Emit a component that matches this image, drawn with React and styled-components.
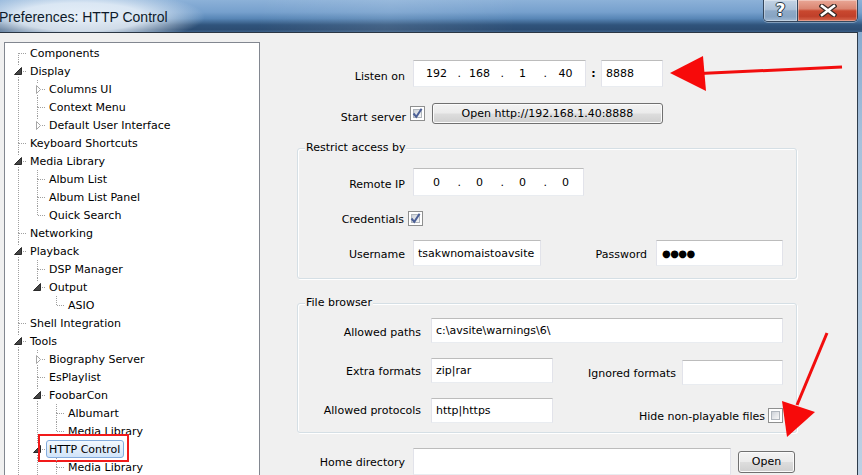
import React from 'react';
import styled, { createGlobalStyle } from 'styled-components';

const GlobalStyle = createGlobalStyle`
  html, body { margin: 0; padding: 0; background: #f0f0f0; overflow: hidden; }
  body { font-family: "DejaVu Sans", Tahoma, sans-serif; font-size: 11px; color: #000; }
  * { box-sizing: border-box; }
`;

const Window = styled.div`
  position: relative;
  width: 862px;
  height: 475px;
  overflow: hidden;
  display: flex;
  flex-direction: column;
  background: linear-gradient(180deg, #7fa5cc 0%, #a7c1dc 30%, #bcd0e4 100%);
`;

const TitleBar = styled.div`
  height: 32px;
  flex: none;
  display: flex;
  align-items: flex-start;
  justify-content: space-between;
  background:
    radial-gradient(ellipse 125px 27px at 80px 17px, rgba(236,243,250,0.97) 0%, rgba(230,239,248,0.88) 52%, rgba(220,232,245,0) 100%),
    linear-gradient(100deg, rgba(255,255,255,0) 30%, rgba(255,255,255,0.10) 45%, rgba(255,255,255,0) 60%),
    linear-gradient(180deg, #8cb1d8 0%, #76a0cd 38%, #5886b6 58%, #30547c 78%, #2c4d73 92%, #3b6088 100%);
`;

const Title = styled.div`
  margin-left: -1px;
  padding-top: 9px;
  font-family: "Liberation Sans", Arial, sans-serif;
  font-size: 14px;
  line-height: 16px;
  color: #0d1a2a;
  white-space: nowrap;
`;

const CaptionGroup = styled.div`
  display: flex;
  margin-right: 4px;
  height: 22px;
  border: 1px solid #34465c;
  border-top: none;
  border-radius: 0 0 5px 5px;
  overflow: hidden;
  box-shadow: 0 1px 0 rgba(255,255,255,0.35);
`;

const CaptionButton = styled.div`
  width: ${p => p.$w}px;
  height: 100%;
  display: flex;
  align-items: center;
  justify-content: center;
  border-right: ${p => (p.$divider ? '1px solid #34465c' : 'none')};
  box-shadow: inset 0 0 0 1px rgba(255,255,255,0.35);
  background: ${p => p.$bg};
`;

const HelpGlyph = styled.span`
  font-family: "DejaVu Sans", sans-serif;
  font-weight: bold;
  font-size: 17px;
  line-height: 17px;
  color: #fff;
  text-shadow: 0 0 1px #1f2d3d, 1px 0 0 #2c3b4c, -1px 0 0 #2c3b4c, 0 1px 0 #2c3b4c, 0 -1px 0 #2c3b4c;
`;

const Body = styled.div`
  flex: 1;
  min-height: 0;
  display: flex;
  align-items: flex-start;
  margin-right: 4px;
  background: #f0f0f0;
  border-top: 1px solid #2a3644;
  border-right: 1px solid #2e3c4b;
  overflow: hidden;
`;

/* ---------- Tree ---------- */

const TreePanel = styled.div`
  width: 256px;
  height: 440px;
  flex: none;
  margin: 9px 0 0 4px;
  padding-top: 1px;
  background: #fff;
  border: 1px solid #828790;
`;

const TreeLine = styled.div`
  display: flex;
  height: 18px;
`;

const DOT_V = (y, h) =>
  `repeating-linear-gradient(to bottom, #a0a0a0 0 1px, transparent 1px 2px) 13px ${y}px / 1px ${h} no-repeat`;
const DOT_H = `repeating-linear-gradient(to right, #a0a0a0 0 1px, transparent 1px 2px) 14px 9px / 8px 1px no-repeat`;

const Guide = styled.div`
  width: 19px;
  flex: none;
  background: ${p => (p.$on ? DOT_V(0, '100%') : 'none')};
`;

const Connector = styled.div`
  position: relative;
  width: 22px;
  flex: none;
  background: ${p => [p.$top && DOT_V(0, '9px'), p.$bottom && DOT_V(9, '9px'), DOT_H].filter(Boolean).join(', ')};
`;

const Expander = styled.svg`
  position: absolute;
  left: 9px;
  top: 4px;
  width: 9px;
  height: 11px;
  background: #fff;
`;

const NodeLabel = styled.span`
  position: relative;
  display: flex;
  align-items: center;
  height: 18px;
  padding: 1px 3px 0 2px;
  white-space: nowrap;
  border: 1px solid ${p => (p.$selected ? '#84acdd' : 'transparent')};
  border-radius: 3px;
  background: ${p => (p.$selected ? 'linear-gradient(180deg, #f2f8fe 0%, #e1eefc 50%, #d0e4fa 100%)' : 'transparent')};
`;

const Callout = styled.span`
  position: absolute;
  left: -9px;
  right: -6px;
  top: -7px;
  bottom: -5px;
  border: 2px solid #f11a1a;
  pointer-events: none;
`;

const treeRows = [
  { t: 'Components', g: [], first: true },
  { t: 'Display', g: [], exp: 'open' },
  { t: 'Columns UI', g: [1], exp: 'closed' },
  { t: 'Context Menu', g: [1] },
  { t: 'Default User Interface', g: [1], last: true, exp: 'closed' },
  { t: 'Keyboard Shortcuts', g: [] },
  { t: 'Media Library', g: [], exp: 'open' },
  { t: 'Album List', g: [1] },
  { t: 'Album List Panel', g: [1] },
  { t: 'Quick Search', g: [1], last: true },
  { t: 'Networking', g: [] },
  { t: 'Playback', g: [], exp: 'open' },
  { t: 'DSP Manager', g: [1] },
  { t: 'Output', g: [1], last: true, exp: 'open' },
  { t: 'ASIO', g: [1, 0], last: true },
  { t: 'Shell Integration', g: [] },
  { t: 'Tools', g: [], exp: 'open' },
  { t: 'Biography Server', g: [1], exp: 'closed' },
  { t: 'EsPlaylist', g: [1] },
  { t: 'FoobarCon', g: [1], exp: 'open' },
  { t: 'Albumart', g: [1, 1] },
  { t: 'Media Library', g: [1, 1], last: true },
  { t: 'HTTP Control', g: [1], exp: 'open', selected: true },
  { t: 'Media Library', g: [1, 1] },
];

function TreeRow({ row }) {
  return (
    <TreeLine>
      {row.g.map((on, i) => (
        <Guide key={i} $on={!!on} />
      ))}
      <Connector $top={!row.first} $bottom={!row.last}>
        {row.exp === 'open' && (
          <Expander viewBox="0 0 9 11">
            <polygon points="7.5,1.5 7.5,8.5 0.5,8.5" fill="#454545" stroke="#2a2a2a" strokeWidth="1" />
          </Expander>
        )}
        {row.exp === 'closed' && (
          <Expander viewBox="0 0 9 11">
            <polygon points="3.5,1.5 7.5,5.5 3.5,9.5" fill="#fff" stroke="#a6a6a6" strokeWidth="1" />
          </Expander>
        )}
      </Connector>
      <NodeLabel $selected={row.selected}>
        {row.t}
        {row.selected && <Callout />}
      </NodeLabel>
    </TreeLine>
  );
}

/* ---------- Settings ---------- */

const Settings = styled.div`
  flex: 1;
  display: flex;
  flex-direction: column;
  padding: 27px 0 0 37px;
`;

const FormRow = styled.div`
  display: flex;
  align-items: ${p => p.$align || 'center'};
  height: ${p => p.$h}px;
  margin-top: ${p => p.$mt || 0}px;
  flex: none;
`;

const FieldLabel = styled.span`
  width: ${p => p.$w}px;
  flex: none;
  margin-right: ${p => p.$gap}px;
  text-align: right;
  white-space: nowrap;
  line-height: 13px;
  padding-top: ${p => (p.$shift > 0 ? p.$shift * 2 : 0)}px;
  padding-bottom: ${p => (p.$shift < 0 ? -p.$shift * 2 : 0)}px;
`;

const InlineLabel = styled.span`
  flex: none;
  margin-left: ${p => p.$ml || '0'};
  margin-right: ${p => p.$gap}px;
  white-space: nowrap;
  line-height: 13px;
  padding-top: 2px;
`;

const TextBox = styled.div`
  width: ${p => (p.$w ? `${p.$w}px` : 'auto')};
  flex: ${p => (p.$w ? 'none' : '1')};
  height: ${p => p.$h}px;
  display: flex;
  align-items: center;
  padding-left: 4px;
  background: #fff;
  border: 1px solid;
  border-color: #bcbcbc #e2e3ea #e9ecf0 #e2e3ea;
  white-space: nowrap;
  overflow: hidden;
`;

const IpSeg = styled.span`
  width: 37px;
  flex: none;
  text-align: center;
`;

const IpDot = styled.span`
  width: 6px;
  flex: none;
  text-align: right;
`;

const Colon = styled.span`
  width: 15px;
  flex: none;
  text-align: center;
  font-weight: bold;
`;

const Secret = styled.span`
  font-size: 10px;
  letter-spacing: -0.6px;
  padding-left: 1px;
`;

const CheckBox = styled.div`
  width: 15px;
  height: 15px;
  flex: none;
  border: 1px solid #8e8f8f;
  padding: 2px;
  background: #fff;
  display: flex;
`;

const CheckInner = styled.div`
  flex: 1;
  display: flex;
  align-items: center;
  justify-content: center;
  border: 1px solid #b0b6bd;
  background: linear-gradient(135deg, #cdd2d8 0%, #e4e6e9 50%, #f7f7f7 100%);
  overflow: visible;
`;

const CheckMark = styled.svg`
  width: 11px;
  height: 11px;
  flex: none;
  margin: -2px;
`;

const PushButton = styled.div`
  width: ${p => p.$w}px;
  height: ${p => p.$h}px;
  flex: none;
  margin-left: ${p => p.$ml || 0}px;
  display: flex;
  align-items: center;
  justify-content: center;
  border: 1px solid #707070;
  border-radius: 3px;
  box-shadow: inset 0 0 0 1px #fbfbfb;
  background: linear-gradient(180deg, #f3f3f3 0%, #ebebeb 48%, #dddddd 52%, #cfcfcf 100%);
  white-space: nowrap;
`;

const Group = styled.div`
  width: 500px;
  margin-top: ${p => p.$mt}px;
  display: flex;
  flex-direction: column;
  padding: 0 13px ${p => p.$pb}px 0;
  border: 1px solid #d5dfe5;
  border-radius: 3px;
  box-shadow: inset 1px 1px 0 #fff, 1px 1px 0 #fff;
`;

const GroupTitle = styled.span`
  align-self: flex-start;
  margin: -8px 0 0 7px;
  padding: 0 1px;
  line-height: 14px;
  background: #f0f0f0;
`;

const SideGroup = styled.div`
  margin-left: auto;
  display: flex;
  align-items: center;
  align-self: ${p => p.$self || 'auto'};
  margin-top: ${p => p.$mt || 0}px;
`;

const Annotations = styled.svg`
  position: absolute;
  left: 0;
  top: 0;
  width: 862px;
  height: 475px;
  pointer-events: none;
`;

function IpAddress({ parts }) {
  const out = [];
  parts.forEach((p, i) => {
    if (i) out.push(<IpDot key={`d${i}`}>.</IpDot>);
    out.push(<IpSeg key={`s${i}`}>{p}</IpSeg>);
  });
  return out;
}

function Check({ checked }) {
  return (
    <CheckBox>
      <CheckInner>
        {checked && (
          <CheckMark viewBox="0 0 11 11">
            <path d="M1.5 5.5 L4.3 8.8 L9.6 0.8" fill="none" stroke="#4b5f96" strokeWidth="2" />
          </CheckMark>
        )}
      </CheckInner>
    </CheckBox>
  );
}

export default function App() {
  return (
    <>
      <GlobalStyle />
      <Window>
        <TitleBar>
          <Title>Preferences: HTTP Control</Title>
          <CaptionGroup>
            <CaptionButton
              $w={34}
              $divider
              $bg="linear-gradient(180deg, #c4d4e5 0%, #abc0d7 45%, #8ea9c7 52%, #87a4c3 80%, #a2bad4 100%)"
            >
              <HelpGlyph>?</HelpGlyph>
            </CaptionButton>
            <CaptionButton
              $w={59}
              $bg="linear-gradient(180deg, #e9a796 0%, #da8571 42%, #c9482f 52%, #c0402a 78%, #d8694f 100%)"
            >
              <svg width="18" height="13" viewBox="0 0 18 13">
                <path d="M3 2 L15 11 M15 2 L3 11" stroke="#3b2a26" strokeWidth="5" strokeLinecap="square" />
                <path d="M3 2 L15 11 M15 2 L3 11" stroke="#ffffff" strokeWidth="2.6" strokeLinecap="square" />
              </svg>
            </CaptionButton>
          </CaptionGroup>
        </TitleBar>

        <Body>
          <TreePanel>
            {treeRows.map((row, i) => (
              <TreeRow key={i} row={row} />
            ))}
          </TreePanel>

          <Settings>
            <FormRow $h={27}>
              <FieldLabel $w={108} $gap={8} $shift={3}>Listen on</FieldLabel>
              <TextBox $w={173} $h={27}>
                <IpAddress parts={['192', '168', '1', '40']} />
              </TextBox>
              <Colon>:</Colon>
              <TextBox $w={62} $h={27}>8888</TextBox>
            </FormRow>

            <FormRow $h={21} $mt={16}>
              <FieldLabel $w={109} $gap={4} $shift={4}>Start server</FieldLabel>
              <Check checked />
              <PushButton $w={231} $h={21} $ml={7}>Open http://192.168.1.40:8888</PushButton>
            </FormRow>

            <Group $mt={24} $pb={12}>
              <GroupTitle>Restrict access by</GroupTitle>
              <FormRow $h={28} $mt={13}>
                <FieldLabel $w={107} $gap={8} $shift={2}>Remote IP</FieldLabel>
                <TextBox $w={171} $h={28}>
                  <IpAddress parts={['0', '0', '0', '0']} />
                </TextBox>
              </FormRow>
              <FormRow $h={15} $mt={15}>
                <FieldLabel $w={106} $gap={4} $shift={1}>Credentials</FieldLabel>
                <Check checked />
              </FormRow>
              <FormRow $h={26} $mt={14}>
                <FieldLabel $w={107} $gap={8} $shift={1}>Username</FieldLabel>
                <TextBox $w={128} $h={26}>tsakwnomaistoavsite</TextBox>
                <InlineLabel $ml="auto" $gap={9}>Password</InlineLabel>
                <TextBox $w={127} $h={26}>
                  <Secret>●●●●</Secret>
                </TextBox>
              </FormRow>
            </Group>

            <Group $mt={24} $pb={9}>
              <GroupTitle>File browser</GroupTitle>
              <FormRow $h={25} $mt={8}>
                <FieldLabel $w={123} $gap={10} $shift={2}>Allowed paths</FieldLabel>
                <TextBox $h={25}>c:\avsite\warnings\6\</TextBox>
              </FormRow>
              <FormRow $h={25} $mt={15}>
                <FieldLabel $w={123} $gap={10} $shift={1}>Extra formats</FieldLabel>
                <TextBox $w={122} $h={25}>zip|rar</TextBox>
                <SideGroup $mt={4}>
                  <InlineLabel $gap={6}>Ignored formats</InlineLabel>
                  <TextBox $w={101} $h={25} />
                </SideGroup>
              </FormRow>
              <FormRow $h={25} $mt={15}>
                <FieldLabel $w={123} $gap={10}>Allowed protocols</FieldLabel>
                <TextBox $w={122} $h={25}>http|https</TextBox>
                <SideGroup $self="flex-end">
                  <InlineLabel $gap={3}>Hide non-playable files</InlineLabel>
                  <Check />
                </SideGroup>
              </FormRow>
            </Group>

            <FormRow $h={27} $mt={15}>
              <FieldLabel $w={108} $gap={8} $shift={1}>Home directory</FieldLabel>
              <TextBox $w={318} $h={27} />
              <PushButton $w={57} $h={22} $ml={7}>Open</PushButton>
            </FormRow>
          </Settings>
        </Body>

        <Annotations viewBox="0 0 862 475">
          <line x1="700" y1="73.5" x2="842" y2="67" stroke="#f20d0d" strokeWidth="3" />
          <polygon points="670,73 703,56 706,91" fill="#f70a0a" />
          <line x1="827" y1="333" x2="797" y2="405" stroke="#f20d0d" strokeWidth="3" />
          <polygon points="787,437 782,401 815,412" fill="#f70a0a" />
        </Annotations>
      </Window>
    </>
  );
}
